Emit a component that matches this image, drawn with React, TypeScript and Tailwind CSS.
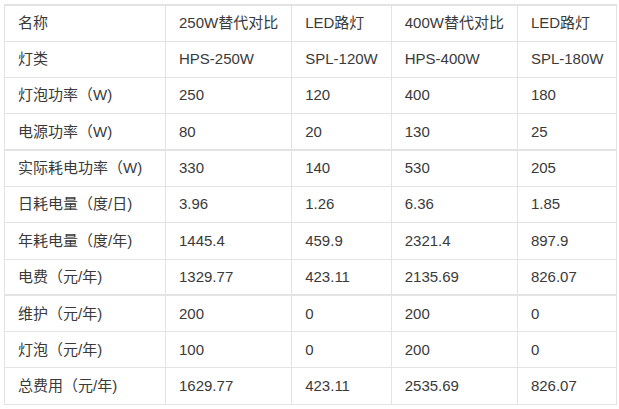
import React from 'react';

const groups: string[][][] = [
  [
    ['名称', '250W替代对比', 'LED路灯', '400W替代对比', 'LED路灯'],
    ['灯类', 'HPS-250W', 'SPL-120W', 'HPS-400W', 'SPL-180W'],
    ['灯泡功率（W)', '250', '120', '400', '180'],
    ['电源功率（W)', '80', '20', '130', '25'],
  ],
  [
    ['实际耗电功率（W)', '330', '140', '530', '205'],
    ['日耗电量（度/日)', '3.96', '1.26', '6.36', '1.85'],
    ['年耗电量（度/年)', '1445.4', '459.9', '2321.4', '897.9'],
    ['电费（元/年)', '1329.77', '423.11', '2135.69', '826.07'],
  ],
  [
    ['维护（元/年)', '200', '0', '200', '0'],
    ['灯泡（元/年)', '100', '0', '200', '0'],
    ['总费用（元/年)', '1629.77', '423.11', '2535.69', '826.07'],
  ],
];

const widths = ['w-[161px]', 'w-[126px]', 'w-[98px]', 'w-[125px]', 'w-[99px]'];

export default function App() {
  return (
    <div className="w-[619px] h-[409px] bg-white pl-[4px] pt-[4px]">
      <table
        className="border-collapse text-[15px] text-[#3a3a3a] border-t-2 border-[#e3e3e3]"
        style={{ fontFamily: '"Liberation Sans", Arial, "Noto Sans CJK SC", sans-serif' }}
      >
        {groups.map((rows, gi) => (
          <tbody key={gi} className={gi > 0 ? 'border-t-2 border-[#e3e3e3]' : ''}>
            {rows.map((row, ri) => (
              <tr key={ri}>
                {row.map((cell, ci) => (
                  <td
                    key={ci}
                    className={`${widths[ci]} h-[36.3px] border border-[#e3e3e3] px-[13px] py-0 align-middle whitespace-nowrap`}
                  >
                    {cell}
                  </td>
                ))}
              </tr>
            ))}
          </tbody>
        ))}
      </table>
    </div>
  );
}
